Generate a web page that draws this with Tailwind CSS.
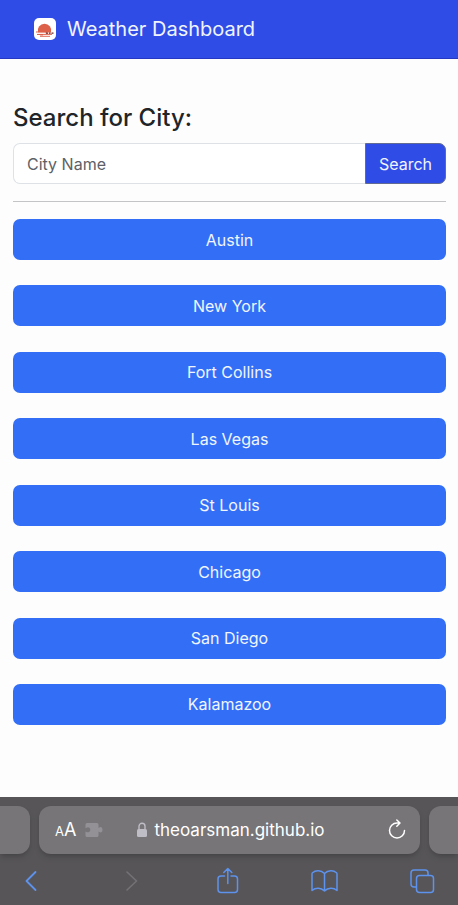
<!DOCTYPE html>
<html lang="en">
<head>
<meta charset="utf-8">
<meta name="viewport" content="width=device-width, initial-scale=1">
<title>Weather Dashboard</title>
<script src="https://cdn.jsdelivr.net/npm/@tailwindcss/browser@4"></script>
</head>
<body class="flex min-h-screen flex-col bg-[#fdfdfd] font-['Inter','Liberation_Sans',sans-serif] text-base leading-6 text-[#212529]">
<header class="flex h-[59px] shrink-0 items-center gap-[11px] border-b border-[#2438c4] bg-[#2f4de6] px-[34px]">
  <svg class="size-[22px]" viewBox="0 0 22 22" aria-hidden="true">
    <rect width="22" height="22" rx="5" fill="#fff"/>
    <path d="M4 14.500A6.800 6.800 0 1 1 17 14.500z" fill="#dd6049"/>
    <path d="M2 14h11M3 16.400h15M6 18.200h10" stroke="#dd6049" stroke-width="1.200"/>
    <path d="M12 15.200h2M15 15.200h1.500M17.500 15.200h2" stroke="#6b2722" stroke-width="1.200"/>
    <path d="M3 15.300h8M9 17.300h9" stroke="#fff" stroke-width=".8"/>
  </svg>
  <h1 class="text-xl leading-7 font-normal text-[#f1f4ff]">Weather Dashboard</h1>
</header>

<main class="flex grow flex-col pt-[42px] pr-3 pb-[72px] pl-[13px]">
  <form class="border-b border-[#c3c4c6] pb-[17px]">
    <label for="city" class="mb-2 block text-2xl leading-[34px] font-medium">Search for City:</label>
    <div class="flex h-[41px]">
      <input id="city" type="text" placeholder="City Name" class="min-w-0 grow rounded-l-[7px] border border-r-0 border-[#dee2e6] bg-white px-[13px] outline-none placeholder:text-[#5d6167]">
      <button type="button" class="rounded-r-[7px] border border-[#626b91] bg-[#2f4de6] px-[13px] text-[#f1f4ff]">Search</button>
    </div>
  </form>
  <div class="mt-[17px] flex grow flex-col justify-between gap-4">
    <button type="button" class="h-[41px] rounded-[7px] bg-[#326ff6] text-[#f1f5ff]">Austin</button>
    <button type="button" class="h-[41px] rounded-[7px] bg-[#326ff6] text-[#f1f5ff]">New York</button>
    <button type="button" class="h-[41px] rounded-[7px] bg-[#326ff6] text-[#f1f5ff]">Fort Collins</button>
    <button type="button" class="h-[41px] rounded-[7px] bg-[#326ff6] text-[#f1f5ff]">Las Vegas</button>
    <button type="button" class="h-[41px] rounded-[7px] bg-[#326ff6] text-[#f1f5ff]">St Louis</button>
    <button type="button" class="h-[41px] rounded-[7px] bg-[#326ff6] text-[#f1f5ff]">Chicago</button>
    <button type="button" class="h-[41px] rounded-[7px] bg-[#326ff6] text-[#f1f5ff]">San Diego</button>
    <button type="button" class="h-[41px] rounded-[7px] bg-[#326ff6] text-[#f1f5ff]">Kalamazoo</button>
  </div>
</main>

<footer class="shrink-0 overflow-hidden bg-[#575558] pt-[9px] pb-[10px]">
  <div class="flex h-12 gap-[9px]">
    <div class="w-[30px] shrink-0 rounded-r-xl bg-[#777578] shadow-md shadow-black/15"></div>
    <div class="flex min-w-0 grow items-center rounded-xl bg-[#777578] pr-[14px] pl-4 text-white shadow-md shadow-black/15">
      <div class="flex w-12 shrink-0 items-center justify-between">
        <button type="button" aria-label="Page settings" class="flex items-baseline leading-6"><span class="text-[13px]">A</span><span class="text-[18px]">A</span></button>
        <svg class="h-4 w-[18px]" viewBox="0 0 18 16" fill="#939196" aria-hidden="true"><path d="M2 1h10q1.500 0 1.500 1.500v3.300c.6 0 1-.9 2-.9 1.300 0 2 1.200 2 2.800s-.7 2.800-2 2.800c-1 0-1.400-.9-2-.9v3.900q0 1.500-1.500 1.500H2Q.5 15 .5 13.500V9.400c.7 0 1.200.9 2.500.9 1.400 0 2.300-1.100 2.300-2.500S4.400 5.300 3 5.300C1.700 5.300 1.200 6.200.5 6.200V2.500Q.5 1 2 1z"/></svg>
      </div>
      <div class="flex grow items-center justify-center gap-[6px]">
        <svg class="h-4 w-3" viewBox="0 0 12 16" aria-hidden="true"><rect x="1" y="7" width="10" height="8" rx="1.500" fill="#bfbdc5"/><path d="M3 7.500V4.300a3 3 0 0 1 6 0v3.200" fill="none" stroke="#bfbdc5" stroke-width="1.400"/></svg>
        <span class="text-[17px]">theoarsman.github.io</span>
      </div>
      <button type="button" aria-label="Reload" class="flex w-12 shrink-0 justify-end">
        <svg class="h-6 w-[18px]" viewBox="0 0 18 24" fill="none" stroke="#fff" stroke-width="1.500" stroke-linecap="round" stroke-linejoin="round"><path d="M16.500 12.500A7.500 7.500 0 1 1 9 5h2.800M8.800 2l3.200 3-3.200 3.200"/></svg>
      </button>
    </div>
    <div class="w-[29px] shrink-0 rounded-l-xl bg-[#777578] shadow-md shadow-black/15"></div>
  </div>
  <nav class="mt-[13px] flex items-center justify-between pr-[22px] pl-[17px] text-[#5d92ed]" aria-label="Browser">
    <button type="button" aria-label="Back"><svg class="size-7" viewBox="0 0 28 28" fill="none" stroke="currentColor" stroke-width="1.800" stroke-linecap="round" stroke-linejoin="round"><path d="M18.500 5L9.500 14l9 9"/></svg></button>
    <button type="button" aria-label="Forward" class="text-[#747276]"><svg class="size-7" viewBox="0 0 28 28" fill="none" stroke="currentColor" stroke-width="1.600" stroke-linecap="round" stroke-linejoin="round"><path d="M12 5l9.500 9-9.500 9"/></svg></button>
    <button type="button" aria-label="Share"><svg class="size-7" viewBox="0 0 28 28" fill="none" stroke="currentColor" stroke-width="1.500" stroke-linecap="round" stroke-linejoin="round"><path d="M11.500 9H8Q5 9 5 12v10.500q0 3 3 3h13.500q3 0 3-3V12q0-3-3-3H18M14.800 16.500V1.500M10.800 5.500l4-4 4 4"/></svg></button>
    <button type="button" aria-label="Bookmarks"><svg class="size-7" viewBox="0 0 28 28" fill="none" stroke="currentColor" stroke-width="1.500" stroke-linecap="round" stroke-linejoin="round"><path d="M14.500 6.500C11 3 5.500 3 2.500 5.800q-.5.500-.5 1.200v16.500c3.500-3 9-3 12.500.5 3.500-3.500 9-3.500 12.500-.5V7q0-.7-.5-1.200C23.500 3 18 3 14.500 6.500zV24"/></svg></button>
    <button type="button" aria-label="Tabs"><svg class="size-7" viewBox="0 0 28 28" fill="none" stroke="currentColor" stroke-width="1.500" stroke-linejoin="round"><rect x="8.500" y="8.500" width="17" height="17" rx="3"/><path d="M8.500 20H6q-3 0-3-3V6q0-3 3-3h11q3 0 3 3v2.500"/></svg></button>
  </nav>
</footer>
</body>
</html>
